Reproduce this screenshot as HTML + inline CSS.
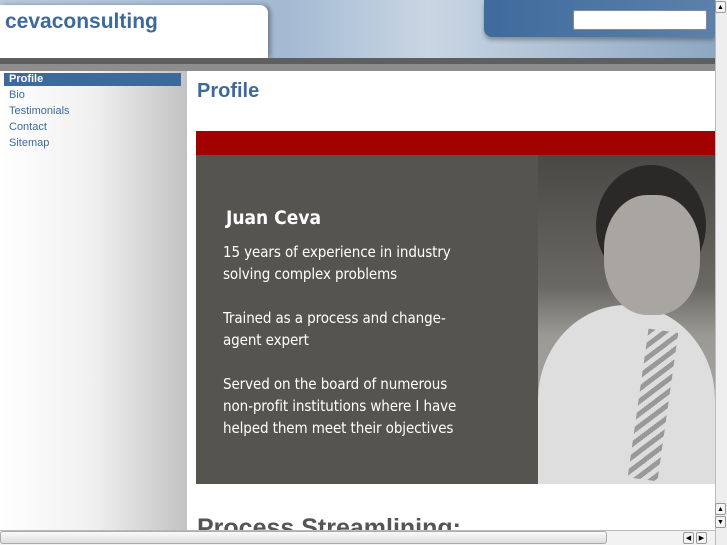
<!DOCTYPE html>
<html><head><style>
*{margin:0;padding:0;box-sizing:border-box}
body{width:727px;height:545px;overflow:hidden;position:relative;font-family:"Liberation Sans",sans-serif;background:#fff}
.hdr{position:absolute;left:0;top:0;width:715px;height:58px;background:linear-gradient(90deg,#b7c9dc 0%,#a3bad3 40%,#c9d6e3 60%,#8ea7c2 100%)}
.tab{position:absolute;left:0;top:5px;width:268px;height:53px;background:#fff;border-radius:0 8px 0 0;box-shadow:3px 0 4px rgba(0,0,0,.3)}
.logo{position:absolute;left:5px;top:10px;font-size:21px;font-weight:bold;color:#3d6a9a}
.blue{position:absolute;left:484px;top:0;width:231px;height:37px;background:linear-gradient(90deg,#3e6b9c,#5b81ab);border-radius:0 0 0 8px;box-shadow:0 3px 4px rgba(0,0,0,.3)}
.inp{position:absolute;left:573px;top:10px;width:134px;height:20px;background:#fff;border:1px solid #889;border-radius:2px}
.bar1{position:absolute;left:0;top:58px;width:715px;height:6px;background:#5f5f5f}
.bar2{position:absolute;left:0;top:64px;width:715px;height:7px;background:#8d8d8d}
.side{position:absolute;left:0;top:71px;width:187px;height:474px;background:linear-gradient(90deg,#fff 0%,#f0f0f0 50%,#c2c2c2 100%)}
.nav{position:absolute;left:4px;top:73px;width:177px}
.nav div{height:16px;font-size:11px;color:#3d6a9a;padding-left:5px;line-height:13px}
.nav .a{background:#3d6a9a;color:#fff;font-weight:bold;height:13px;margin-bottom:3px}
.main{position:absolute;left:187px;top:71px;width:528px;height:474px;background:#fff}
h1{position:absolute;left:197px;top:80px;font-size:20px;color:#3d6a9a}
.red{position:absolute;left:196px;top:131px;width:519px;height:24px;background:#a30000}
.dark{position:absolute;left:196px;top:155px;width:342px;height:329px;background:#56544e;color:#fff;font-family:"DejaVu Sans Condensed","DejaVu Sans",sans-serif}
.photo{position:absolute;left:538px;top:155px;width:177px;height:329px;overflow:hidden;background:linear-gradient(180deg,#4a4845 0%,#6a6862 40%,#9a9994 55%,#b5b5b5 100%)}
.photo .shirt{position:absolute;left:0;top:150px;width:177px;height:190px;border-radius:50% 50% 0 0;background:#dedede}
.photo .hair{position:absolute;left:58px;top:10px;width:110px;height:120px;border-radius:50%;background:#2a2927}
.photo .face{position:absolute;left:66px;top:40px;width:96px;height:120px;border-radius:45%;background:#a9a6a1}
.photo .tie{position:absolute;left:100px;top:175px;width:30px;height:150px;background:repeating-linear-gradient(135deg,#999 0 5px,#ddd 5px 10px);transform:rotate(8deg)}
.dark .n{position:absolute;left:30px;top:52px;font-size:19px;font-weight:bold}
.dark p{position:absolute;left:27px;font-size:15px;line-height:22px;letter-spacing:-.1px}
.h2{position:absolute;left:197px;top:514px;font-size:25px;font-weight:bold;color:#555}
.vs{position:absolute;left:715px;top:0;width:12px;height:545px;background:#eee;border-left:1px solid #bbb}
.hs{position:absolute;left:0;top:530px;width:715px;height:15px;background:#f2f2f2;border-top:1px solid #bbb}
.th{position:absolute;left:0;top:531px;width:607px;height:13px;background:linear-gradient(#fafafa,#ddd);border:1px solid #aaa;border-radius:3px}
.btn{position:absolute;width:11px;height:12px;background:#f4f4f4;border:1px solid #999;border-radius:2px;font-size:7px;text-align:center;line-height:11px;color:#000}
</style></head><body>
<div class="hdr"></div>
<div class="tab"></div><div class="logo">cevaconsulting</div>
<div class="blue"></div><div class="inp"></div>
<div class="bar1"></div><div class="bar2"></div>
<div class="side"></div>
<div class="nav"><div class="a">Profile</div><div>Bio</div><div>Testimonials</div><div>Contact</div><div>Sitemap</div></div>
<div class="main"></div>
<h1>Profile</h1>
<div class="red"></div>
<div class="dark"><div class="n">Juan Ceva</div>
<p style="top:86px">15 years of experience in industry<br>solving complex problems</p>
<p style="top:152px">Trained as a process and change-<br>agent expert</p>
<p style="top:218px">Served on the board of numerous<br>non-profit institutions where I have<br>helped them meet their objectives</p></div>
<div class="photo"><div class="shirt"></div><div class="hair"></div><div class="face"></div><div class="tie"></div></div>
<div class="h2">Process Streamlining:</div>
<div class="vs"></div>
<div class="btn" style="left:715px;top:1px">▲</div>
<div class="btn" style="left:715px;top:503px">▲</div>
<div class="btn" style="left:715px;top:516px">▼</div>
<div class="hs"></div><div class="th"></div>
<div class="btn" style="left:683px;top:532px">◀</div>
<div class="btn" style="left:696px;top:532px">▶</div>
</body></html>
